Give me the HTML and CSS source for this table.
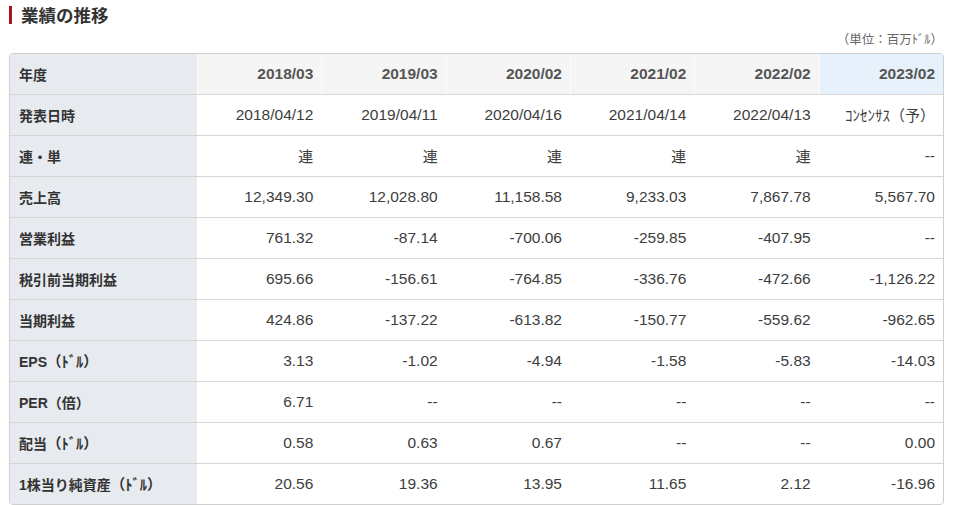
FILE: index.html
```html
<!DOCTYPE html>
<html lang="ja">
<head>
<meta charset="utf-8">
<link rel="stylesheet" href="styles.css">
</head>
<body>
<div class="wrap">
  <h2 class="title">業績の推移</h2>
  <div class="unit">（単位：百万ﾄﾞﾙ）</div>
  <table class="perf">
    <colgroup>
      <col class="c-label">
      <col><col><col><col><col><col>
    </colgroup>
    <thead>
      <tr>
        <th class="label">年度</th>
        <th>2018/03</th>
        <th>2019/03</th>
        <th>2020/02</th>
        <th>2021/02</th>
        <th>2022/02</th>
        <th class="forecast">2023/02</th>
      </tr>
    </thead>
    <tbody>
      <tr><th class="label">発表日時</th><td>2018/04/12</td><td>2019/04/11</td><td>2020/04/16</td><td>2021/04/14</td><td>2022/04/13</td><td class="jp">ｺﾝｾﾝｻｽ（予）</td></tr>
      <tr><th class="label">連・単</th><td class="jp">連</td><td class="jp">連</td><td class="jp">連</td><td class="jp">連</td><td class="jp">連</td><td>--</td></tr>
      <tr><th class="label">売上高</th><td>12,349.30</td><td>12,028.80</td><td>11,158.58</td><td>9,233.03</td><td>7,867.78</td><td>5,567.70</td></tr>
      <tr><th class="label">営業利益</th><td>761.32</td><td>-87.14</td><td>-700.06</td><td>-259.85</td><td>-407.95</td><td>--</td></tr>
      <tr><th class="label">税引前当期利益</th><td>695.66</td><td>-156.61</td><td>-764.85</td><td>-336.76</td><td>-472.66</td><td>-1,126.22</td></tr>
      <tr><th class="label">当期利益</th><td>424.86</td><td>-137.22</td><td>-613.82</td><td>-150.77</td><td>-559.62</td><td>-962.65</td></tr>
      <tr><th class="label">EPS<span class="hw">（ﾄﾞﾙ）</span></th><td>3.13</td><td>-1.02</td><td>-4.94</td><td>-1.58</td><td>-5.83</td><td>-14.03</td></tr>
      <tr><th class="label">PER（倍）</th><td>6.71</td><td>--</td><td>--</td><td>--</td><td>--</td><td>--</td></tr>
      <tr><th class="label">配当<span class="hw">（ﾄﾞﾙ）</span></th><td>0.58</td><td>0.63</td><td>0.67</td><td>--</td><td>--</td><td>0.00</td></tr>
      <tr><th class="label">1株当り純資産<span class="hw">（ﾄﾞﾙ）</span></th><td>20.56</td><td>19.36</td><td>13.95</td><td>11.65</td><td>2.12</td><td>-16.96</td></tr>
    </tbody>
  </table>
</div>
</body>
</html>
```

FILE: styles.css
```css
html, body {
  margin: 0;
  padding: 0;
  background: #fff;
}
body {
  font-family: "Liberation Sans", Arial, "Noto Sans CJK JP", sans-serif;
  color: #333;
}
.wrap {
  padding: 6px 0 0 9px;
  width: 935px;
}
.title {
  margin: 0;
  height: 18px;
  line-height: 18px;
  border-left: 3px solid #b0121b;
  padding-left: 9px;
  font-family: "Noto Sans CJK JP", sans-serif;
  font-size: 17.5px;
  font-weight: bold;
  color: #333;
}
.unit {
  margin-top: 7px;
  height: 16px;
  line-height: 16px;
  text-align: right;
  padding-right: 1px;
  font-family: "Noto Sans CJK JP", sans-serif;
  font-size: 12.5px;
  color: #666;
}
.perf {
  margin-top: 6px;
  width: 935px;
  table-layout: fixed;
  border-collapse: separate;
  border-spacing: 0;
  border: 1px solid #cfcfcf;
  border-radius: 4px;
  overflow: hidden;
}
.c-label {
  width: 187px;
}
.perf th, .perf td {
  height: 41px;
  padding: 0 8px 1px 0;
  border-bottom: 1px solid #d6d6d6;
  text-align: right;
  vertical-align: middle;
  box-sizing: border-box;
  white-space: nowrap;
}
.perf tbody tr:last-child th,
.perf tbody tr:last-child td {
  border-bottom: none;
  height: 40px;
}
.perf td {
  font-size: 15.5px;
  color: #3d3d3d;
  font-weight: normal;
}
.perf td.jp {
  font-family: "Noto Sans CJK JP", sans-serif;
  font-size: 15px;
}
.perf th.label {
  text-align: left;
  padding: 0 0 1px 9px;
  background: #e7eaef;
  font-family: "Liberation Sans", Arial, "Noto Sans CJK JP", sans-serif;
  font-size: 14px;
  font-weight: bold;
  color: #333;
}
.hw {
  font-family: "Noto Sans CJK JP", sans-serif;
  font-size: 14.5px;
}
.perf thead th {
  background: #f5f5f5;
  border-left: 1px solid #fbfbfb;
  font-size: 15.5px;
  font-weight: bold;
  color: #555;
}
.perf thead th.label {
  border-left: none;
  background: #e7eaef;
}
.perf thead th.forecast {
  background: #e6f1fc;
}
```
